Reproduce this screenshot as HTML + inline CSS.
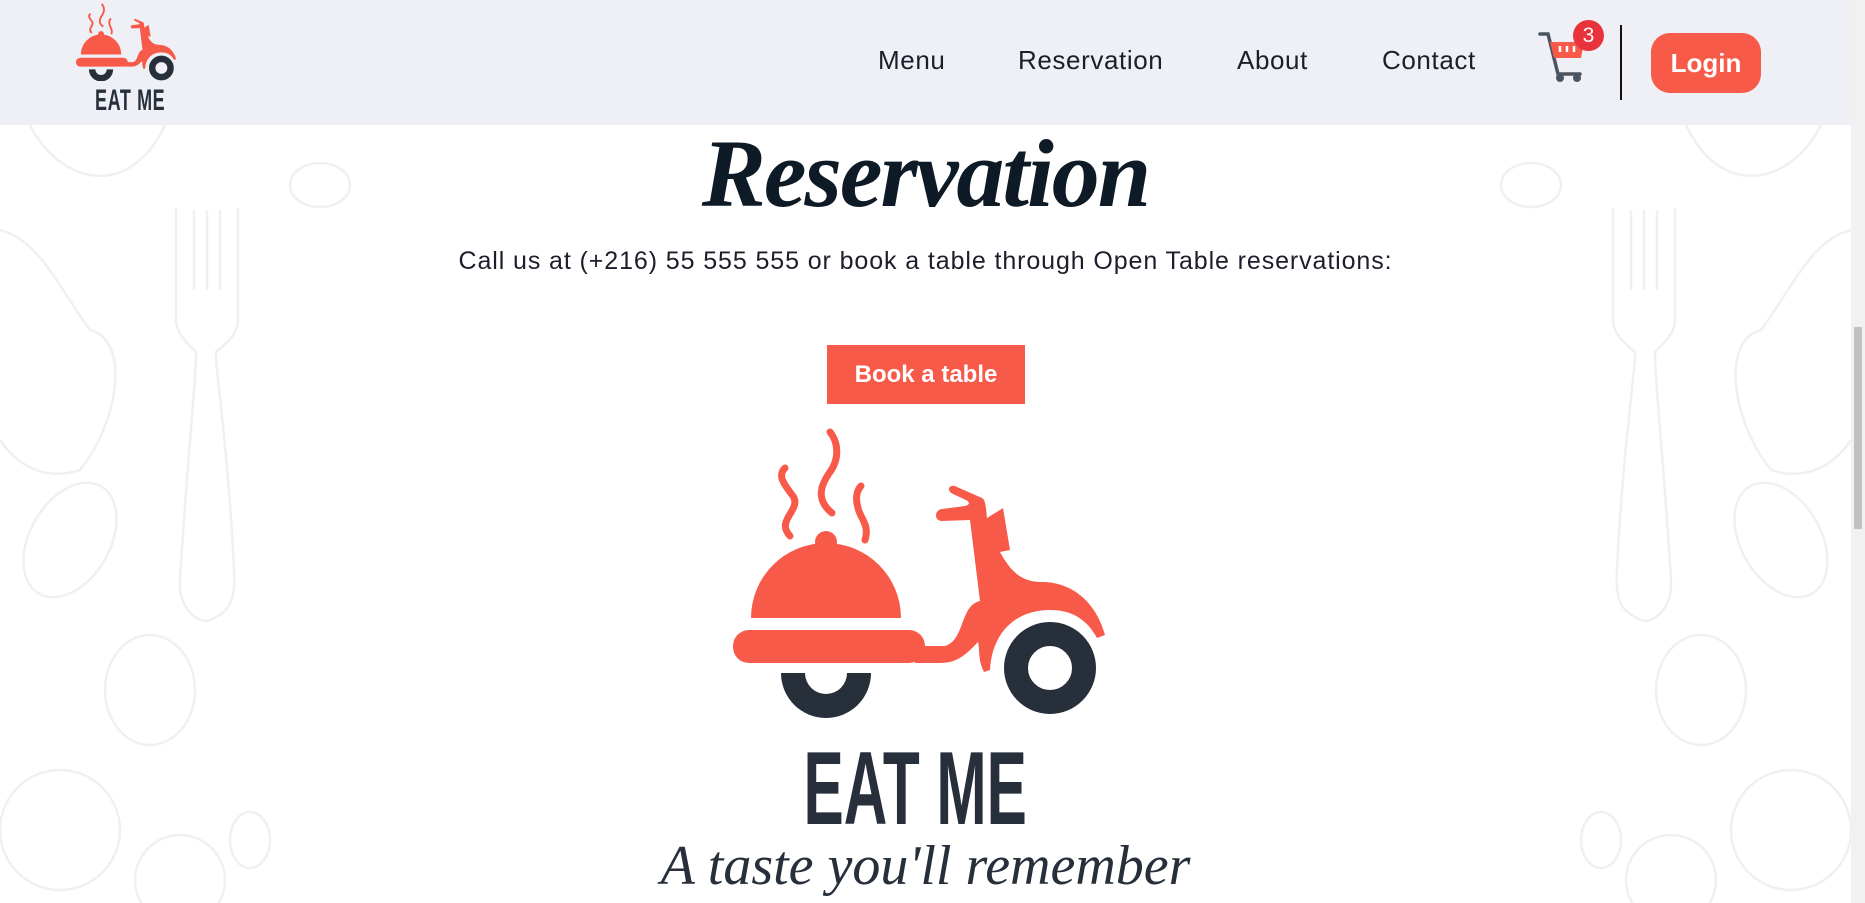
<!DOCTYPE html>
<html><head><meta charset="utf-8"><style>
*{margin:0;padding:0;box-sizing:border-box}
body{width:1865px;height:903px;overflow:hidden;background:#fff;font-family:"Liberation Sans",sans-serif;position:relative}
.abs{position:absolute}
header{position:absolute;left:0;top:0;width:1851px;height:125px;background:#eff0f5}
.nav{position:absolute;top:45px;font-size:26px;letter-spacing:.6px;color:#1d1d2b;white-space:nowrap}
.sb{position:absolute;left:1851px;top:0;width:14px;height:903px;background:#f1f1f1}
</style></head><body>
<svg class="abs" style="left:0;top:125px" width="1851" height="778" viewBox="0 125 1851 778" fill="none" stroke="#f1f0ed" stroke-width="2.5">
<g id="fork">
<path d="M176 208 L176 320 C176 335 190 345 196 352 L196 360 C194 400 186 480 180 580 C178 610 200 625 210 620 C230 612 236 600 234 570 C230 480 220 400 216 360 L216 352 C224 345 238 335 238 320 L238 208 M194 210 L194 290 M207 210 L207 290 M220 210 L220 290"/>
<ellipse cx="320" cy="185" rx="30" ry="22"/>
<ellipse cx="70" cy="540" rx="40" ry="62" transform="rotate(30 70 540)"/>
<path d="M0 230 C40 240 60 290 90 330 C130 340 120 420 80 470 C50 480 20 470 0 440"/>
<path d="M30 125 C60 185 130 200 165 125"/>
<ellipse cx="150" cy="690" rx="45" ry="55"/>
<circle cx="60" cy="830" r="60"/>
<circle cx="180" cy="880" r="45"/>
<ellipse cx="250" cy="840" rx="20" ry="28"/>
</g>
<use href="#fork" transform="translate(1851 0) scale(-1 1)"/>
</svg>
<header>
<svg class="abs" style="left:76px;top:3px" width="101" height="78" viewBox="13 8 375 287"><use href="#scoot"/></svg>
<div class="abs" style="left:95px;top:84px;font-size:30px;font-weight:bold;color:#262f3a;transform:scaleX(.6);transform-origin:left top;letter-spacing:1px">EAT ME</div>
<div class="nav" style="left:878px">Menu</div>
<div class="nav" style="left:1018px">Reservation</div>
<div class="nav" style="left:1237px">About</div>
<div class="nav" style="left:1382px">Contact</div>
<svg class="abs" style="left:1538px;top:30px" width="50" height="52" viewBox="0 0 50 52">
<path d="M2 4 L10 4 L20 44 L42 44" stroke="#4a5561" stroke-width="3.5" fill="none" stroke-linecap="round"/>
<path d="M12 12 L46 12 L43 28 L16 28 Z" fill="#f85a4a"/>
<path d="M22 16v6M29 16v6M36 16v6" stroke="#fff" stroke-width="2.5"/>
<circle cx="22" cy="48" r="4" fill="#4a5561"/><circle cx="39" cy="48" r="4" fill="#4a5561"/>
</svg>
<div class="abs" style="left:1573px;top:20px;width:31px;height:31px;border-radius:50%;background:#e8333d;color:#fff;font-size:21px;text-align:center;line-height:31px">3</div>
<div class="abs" style="left:1620px;top:25px;width:2px;height:75px;background:#111"></div>
<div class="abs" style="left:1651px;top:33px;width:110px;height:60px;border-radius:19px;background:#f85a4a;color:#fff;font-size:26px;font-weight:bold;text-align:center;line-height:60px">Login</div>
</header>
<div class="abs" style="left:0;width:1851px;top:118px;text-align:center;font-family:'Liberation Serif',serif;font-style:italic;font-weight:bold;font-size:96px;color:#0e1a26;letter-spacing:-2px">Reservation</div>
<div class="abs" style="left:0;width:1851px;top:247px;text-align:center;font-size:25px;letter-spacing:.9px;color:#1d1d2b">Call us at (+216) 55 555 555 or book a table through Open Table reservations:</div>
<div class="abs" style="left:827px;top:345px;width:198px;height:59px;background:#f85a4a;color:#fff;font-size:24px;font-weight:bold;text-align:center;line-height:59px">Book a table</div>
<svg class="abs" style="left:720px;top:420px" width="400" height="300" viewBox="0 0 400 300">
<defs><g id="scoot">
<g stroke="#f85a4a" stroke-width="7" fill="none" stroke-linecap="round">
<path d="M70 116 C55 100 82 90 73 76 C62 62 58 55 65 48"/>
<path d="M112 93 C96 80 100 66 110 52 C120 38 118 22 110 12"/>
<path d="M145 120 C150 105 140 98 138 88 C135 78 137 70 141 66"/>
</g>
<path d="M31 198 A75 75 0 0 1 181 198 Z" fill="#f85a4a"/>
<circle cx="106" cy="122" r="11" fill="#f85a4a"/>
<rect x="13" y="210" width="192" height="33" rx="16" fill="#f85a4a"/>
<path d="M195 226 L225 226 C245 220 240 185 260 181 L250 100 L222 101 C214 101 214 90 222 89 L245 86 C250 85 250 82 246 80 L233 74 C225 70 230 63 237 67 L262 78 C266 80 266 90 267 98 L280 90 L283 88 L290 130 L280 132 C290 150 300 162 322 162 C352 162 376 182 385 215 L377 218 C365 196 348 190 330 190 C296 190 272 212 270 250 L264 252 C258 240 260 232 258 222 C245 236 236 243 220 243 L195 243 Z" fill="#f85a4a"/>
<path d="M61 253 A45 45 0 0 0 151 253 L127 253 A21 21 0 0 1 85 253 Z" fill="#262f3a"/>
<circle cx="330" cy="248" r="34" fill="none" stroke="#262f3a" stroke-width="24"/>
</g></defs>
<use href="#scoot"/>
</svg>
<div class="abs" style="left:0;width:1851px;top:730px;text-align:center;font-size:104px;font-weight:bold;color:#262f3a;transform:scaleX(.58);transform-origin:901px 0">EAT ME</div>
<div class="abs" style="left:0;width:1851px;top:834px;text-align:center;font-family:'Liberation Serif',serif;font-style:italic;font-size:56px;color:#262f3a">A taste you'll remember</div>
<div class="sb"><div class="abs" style="left:3px;top:327px;width:8px;height:202px;background:#c1c1c1"></div></div>
</body></html>
